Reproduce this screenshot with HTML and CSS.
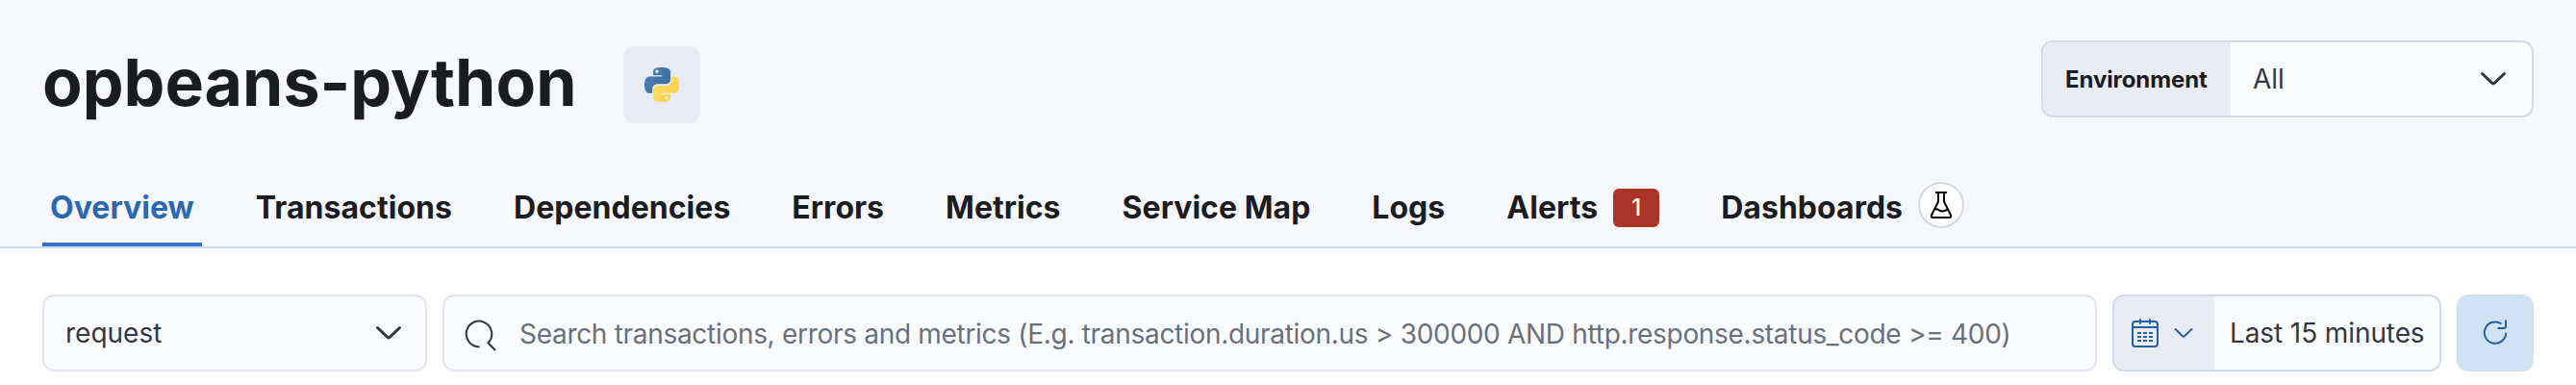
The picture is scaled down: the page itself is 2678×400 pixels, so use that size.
FILE: index.html
```
<!DOCTYPE html>
<html lang="en">
<head>
<meta charset="utf-8">
<title>opbeans-python</title>
<link rel="stylesheet" href="styles.css">
</head>
<body>
<header class="header">
  <div class="title-row">
    <h1 class="title">opbeans-python</h1>
    <span class="agent">
      <svg width="36" height="36" viewBox="0 0 36 36">
        <defs>
          <linearGradient id="blue" x1="0" y1="0" x2="1" y2="1"><stop offset="0" stop-color="#5083b8"/><stop offset="1" stop-color="#386796"/></linearGradient>
          <linearGradient id="yellow" x1="0" y1="0" x2="1" y2="1"><stop offset="0" stop-color="#ffe163"/><stop offset="1" stop-color="#f7cb50"/></linearGradient>
        </defs>
        <path fill="url(#blue)" fill-rule="evenodd" d="M17.900 0C11 0 9 1.800 9 4.600V8.200h9.200v1.200H5.400C1.900 9.400 0 12.500 0 18s1.900 8.800 5 8.800H8.200v-4.300c0-3.200 2.700-5.300 5.500-5.300h9.100c2.500 0 4.200-2.100 4.200-4.400V4.600C27 1.700 23.900 0 17.900 0zM13 2.600a1.700 1.700 0 1 1 0 3.400 1.700 1.700 0 0 1 0-3.400z"/>
        <path fill="url(#yellow)" fill-rule="evenodd" d="M28.100 9.400v4.100c0 3.300-2.600 5.500-5.400 5.500h-9.100C11 19 9 21.100 9 23.400v8.200C9 34.400 12.600 36 18 36c5.700 0 9-1.700 9-4.600v-3.600h-9v-1.200h13.200C34.400 26.600 36 23.400 36 18s-1.700-8.600-4.800-8.600zM23 30a1.700 1.700 0 1 1 0 3.400 1.700 1.700 0 0 1 0-3.400z"/>
      </svg>
    </span>
    <div class="env">
      <span class="env-label">Environment</span>
      <span class="env-value">All</span>
      <svg class="chevron" width="32" height="32" viewBox="0 0 32 32"><path d="M4.500 10.500 14.600 20.200Q16 21.500 17.400 20.200L27.500 10.500"/></svg>
    </div>
  </div>
  <nav class="tabs">
    <a class="tab tab-active">Overview</a>
    <a class="tab">Transactions</a>
    <a class="tab">Dependencies</a>
    <a class="tab">Errors</a>
    <a class="tab">Metrics</a>
    <a class="tab">Service Map</a>
    <a class="tab">Logs</a>
    <a class="tab">Alerts<span class="count">1</span></a>
    <a class="tab">Dashboards<span class="beta"><svg width="32" height="32" viewBox="0 0 32 32"><path d="M10 3h12M13 3v9.500L6 26.500Q5 29 7.500 29h17Q27 29 26 26.500L19 12.500V3M9.500 20.500c4-1 4 2 8 2 2.500 0 3-1.500 5-1.500"/></svg></span></a>
  </nav>
</header>
<main class="filters">
  <div class="select">
    <span>request</span>
    <svg class="chevron" width="32" height="32" viewBox="0 0 32 32"><path d="M4.500 10.500 14.600 20.200Q16 21.500 17.400 20.200L27.500 10.500"/></svg>
  </div>
  <div class="search">
    <svg class="search-icon" width="32" height="32" viewBox="0 0 32 32"><path d="M14.500 30.200A13.300 13.300 0 1 1 23.500 26.200L31 34"/></svg>
    <span class="placeholder">Search transactions, errors and metrics (E.g. transaction.duration.us &gt; 300000 AND http.response.status_code &gt;= 400)</span>
  </div>
  <div class="date">
    <span class="date-quick">
      <svg width="28" height="30" viewBox="0 0 28 30"><rect x="1" y="3" width="26" height="26" rx="3"/><path d="M1 9h26M9 1v4M19 1v4"/><path class="dots" d="M6 15h16M6 19h16M6 23h16"/></svg>
      <svg width="20" height="12" viewBox="0 0 20 12"><path d="M1.500 2 8.800 9Q10 10.200 11.200 9L18.500 2"/></svg>
    </span>
    <span class="date-value">Last 15 minutes</span>
  </div>
  <button class="refresh" aria-label="Refresh">
    <svg width="26" height="28" viewBox="0 0 26 28"><path d="M19.500 4.500A11.200 11.200 0 1 0 24.200 13.800M24 .5v6.500q0 2-2 2h-6.500"/></svg>
  </button>
</main>
</body>
</html>
```
FILE: styles.css
```
* { box-sizing: border-box; }
body { margin: 0; background: #fff; color: #343741; font: 400 28px/40px Inter, sans-serif; }
svg { display: block; flex: none; fill: none; }
.header { height: 258px; padding: 42px 44px 0; background: #f7f8fc; border-bottom: 2px solid #d3dae6; display: flex; flex-direction: column; justify-content: space-between; }
.title-row { display: flex; align-items: flex-start; }
.title { margin: 5px 49px 0 0; width: 555px; font-size: 68px; line-height: 76px; font-weight: 700; color: #1a1c21; white-space: nowrap; }
.agent { width: 80px; height: 80px; margin-top: 6px; border-radius: 12px; background: #e9ecf4; display: grid; place-items: center; }
.env { margin-left: auto; width: 512px; height: 80px; border: 2px solid #d3d9e8; border-radius: 12px; background: #fbfcfe; display: flex; align-items: center; overflow: hidden; }
.env-label { width: 195px; height: 76px; padding-left: 23px; background: #e9ecf4; color: #1a1c21; font-size: 24px; line-height: 78px; font-weight: 700; letter-spacing: -.1px; }
.env-value { flex: 1; padding-left: 23px; }
.chevron { stroke: #343741; stroke-width: 3; stroke-linecap: round; }
.env .chevron { margin-right: 24px; }
.tabs { display: flex; gap: 48px; }
.tab { height: 84px; padding: 3px 8px 0; display: flex; align-items: center; font-size: 32px; font-weight: 700; letter-spacing: .03px; color: #1a1c21; white-space: nowrap; }
.tab-active { color: #2b68b4; box-shadow: inset 0 -4px #3374c8; }
.count { width: 48px; height: 40px; margin-left: 16px; border-radius: 6px; background: #ab3528; color: #fff; font-size: 24px; font-weight: 500; text-align: center; }
.beta { width: 48px; height: 48px; margin: -6px 0 0 16px; border: 2px solid #d3dae6; border-radius: 50%; background: #fff; display: grid; place-items: center; }
.beta svg { stroke: #000; stroke-width: 2; }
.filters { display: flex; padding: 48px 44px 14px; height: 142px; }
.select { width: 400px; height: 80px; margin-right: 16px; padding: 0 22px; display: flex; align-items: center; justify-content: space-between; border: 2px solid #e2e5f1; border-radius: 12px; background: #fbfcfe; }
.search { flex: 1; height: 80px; margin-right: 16px; padding-left: 22px; display: flex; align-items: center; border: 2px solid #e2e5f1; border-radius: 12px; background: #fbfcfe; }
.search-icon { stroke: #343741; stroke-width: 2; overflow: visible; }
.placeholder { margin-left: 24px; padding-top: 2px; color: #69707d; letter-spacing: -.3px; white-space: nowrap; }
.date { width: 342px; height: 80px; margin-right: 16px; display: flex; overflow: hidden; border: 2px solid #d3d9e8; border-radius: 12px; background: #fbfcfe; }
.date-quick { width: 104px; display: flex; align-items: center; gap: 16px; padding-left: 18px; background: #e9ecf4; }
.date-quick svg { stroke: #2360a5; stroke-width: 2; stroke-linecap: round; }
.date-quick .dots { stroke-dasharray: 4 2; stroke-linecap: butt; }
.date-value { padding: 18px 0 0 16px; letter-spacing: -.1px; white-space: nowrap; }
.refresh { width: 80px; height: 80px; padding: 0; border: 0; border-radius: 12px; background: #d1e2f2; display: grid; place-items: center; }
.refresh svg { stroke: #2360a5; stroke-width: 2; }
```
